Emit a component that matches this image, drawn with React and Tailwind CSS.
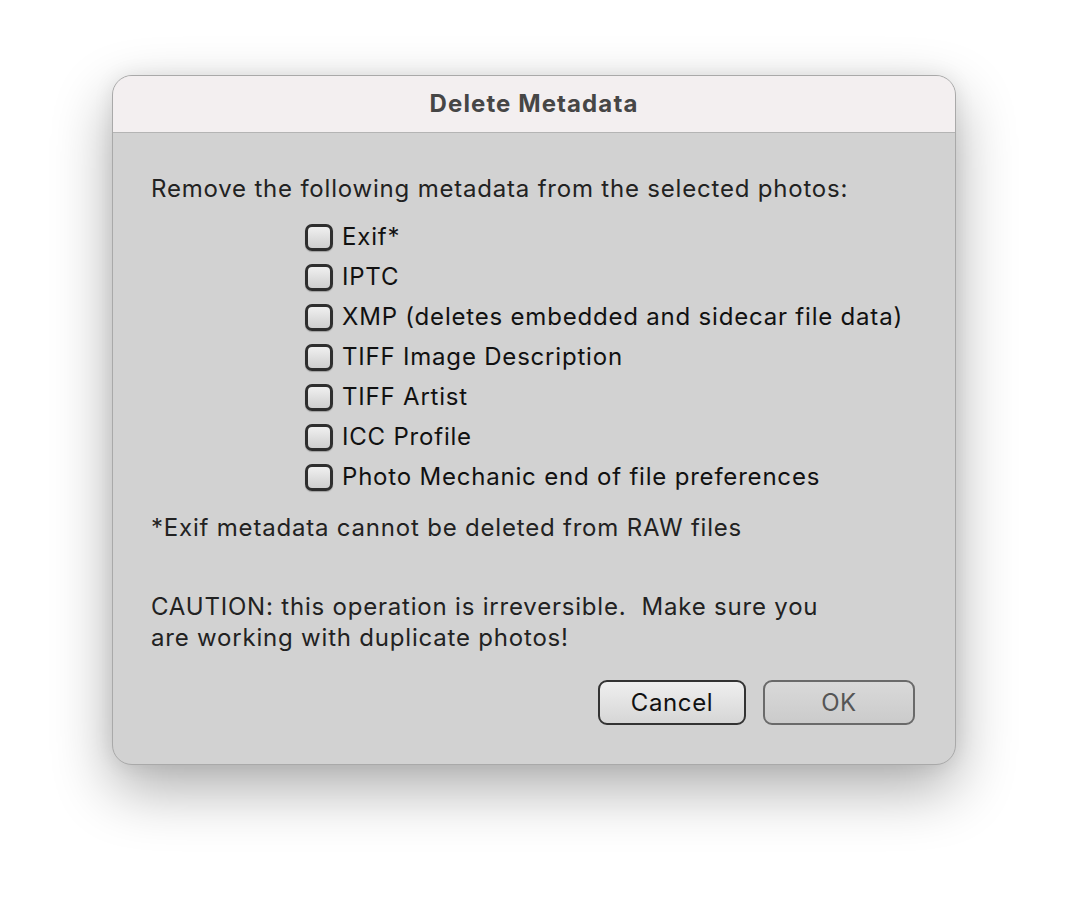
import React from 'react';

const options = [
  "Exif*",
  "IPTC",
  "XMP (deletes embedded and sidecar file data)",
  "TIFF Image Description",
  "TIFF Artist",
  "ICC Profile",
  "Photo Mechanic end of file preferences",
];

function Checkbox() {
  return (
    <span className="block shrink-0 w-[28px] h-[27px] rounded-[7px] border-[3px] border-[#2e2e2e] bg-gradient-to-b from-[#f0f0f0] to-[#cfcfcf] shadow-[0_1px_1px_rgba(0,0,0,0.25)]" />
  );
}

export default function App() {
  return (
    <div className="min-h-screen bg-white pt-[75px] font-['Inter',sans-serif]">
      {/* Dialog window */}
      <div className="w-[844px] mx-auto rounded-[20px] border border-[#a9a9a9] bg-[#d2d2d2] overflow-hidden shadow-[0_24px_60px_rgba(0,0,0,0.32),0_0_20px_rgba(0,0,0,0.08)]">
        {/* Title bar */}
        <div className="h-[57px] bg-[#f3eff0] border-b border-[#b4b4b4] flex items-center justify-center">
          <h1 className="text-[24px] font-bold text-[#464646] tracking-[1.1px]">Delete Metadata</h1>
        </div>

        {/* Body */}
        <div className="pl-[38px] pr-[40px] pt-[41px] pb-[39px] text-[24px] leading-[30px] tracking-[0.8px] text-[#222]">
          <p>Remove the following metadata from the selected photos:</p>

          <div className="mt-[13px] ml-[154px] flex flex-col">
            {options.map((label, i) => (
              <label key={i} className="h-[40px] flex items-center gap-[9px] text-[#111]">
                <Checkbox />
                <span>{label}</span>
              </label>
            ))}
          </div>

          <p className="mt-[16px]">*Exif metadata cannot be deleted from RAW files</p>

          <p className="mt-[48px] leading-[31px]">
            CAUTION: this operation is irreversible.&nbsp; Make sure you
            <br />
            are working with duplicate photos!
          </p>

          {/* Buttons */}
          <div className="mt-[27px] flex justify-end gap-[17px]">
            <button className="w-[148px] h-[45px] rounded-[9px] border-2 border-[#333] bg-gradient-to-b from-[#efefef] to-[#d6d6d6] text-[24px] tracking-[0.6px] text-[#111]">
              Cancel
            </button>
            <button className="w-[152px] h-[45px] rounded-[9px] border-2 border-[#6a6a6a] bg-gradient-to-b from-[#d9d9d9] to-[#cbcbcb] text-[24px] tracking-[0.6px] text-[#555]">
              OK
            </button>
          </div>
        </div>
      </div>
    </div>
  );
}
